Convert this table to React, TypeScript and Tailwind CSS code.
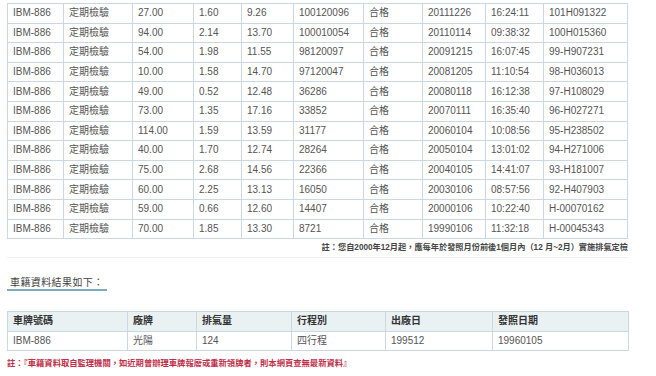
const font = { fontFamily: '"Liberation Sans", "Noto Sans CJK TC", sans-serif' };

const rows = [
  ['27.00', '1.60', '9.26', '100120096', '20111226', '16:24:11', '101H091322'],
  ['94.00', '2.14', '13.70', '100010054', '20110114', '09:38:32', '100H015360'],
  ['54.00', '1.98', '11.55', '98120097', '20091215', '16:07:45', '99-H907231'],
  ['10.00', '1.58', '14.70', '97120047', '20081205', '11:10:54', '98-H036013'],
  ['49.00', '0.52', '12.48', '36286', '20080118', '16:12:38', '97-H108029'],
  ['73.00', '1.35', '17.16', '33852', '20070111', '16:35:40', '96-H027271'],
  ['114.00', '1.59', '13.59', '31177', '20060104', '10:08:56', '95-H238502'],
  ['40.00', '1.70', '12.74', '28264', '20050104', '13:01:02', '94-H271006'],
  ['75.00', '2.68', '14.56', '22366', '20040105', '14:41:07', '93-H181007'],
  ['60.00', '2.25', '13.13', '16050', '20030106', '08:57:56', '92-H407903'],
  ['59.00', '0.66', '12.60', '14407', '20000106', '10:22:40', 'H-00070162'],
  ['70.00', '1.85', '13.30', '8721', '19990106', '11:32:18', 'H-00045343'],
];

const topCols = [56, 69, 61, 48, 52, 70, 59, 63, 58, 84];
const carCols = [120, 69, 95, 94, 107, 136];
const carHead = ['車牌號碼', '廠牌', '排氣量', '行程別', '出廠日', '發照日期'];
const carRow = ['IBM-886', '光陽', '124', '四行程', '199512', '19960105'];

function Cell({ children }: { children: React.ReactNode }) {
  return (
    <td className="h-[19.6px] border border-[#c9d8e3] px-[5px] py-0 text-[10px] leading-none text-[#555] whitespace-nowrap">
      {children}
    </td>
  );
}

export default function App() {
  return (
    <div className="min-h-[376px] w-[656px] bg-white pt-[3px] pl-[7px]" style={font}>
      <div className="w-[621px]">
        <table className="w-[621px] table-fixed border-collapse">
          <colgroup>
            {topCols.map((w, i) => (
              <col key={i} style={{ width: w }} />
            ))}
          </colgroup>
          <tbody>
            {rows.map((r, i) => (
              <tr key={i}>
                <Cell>IBM-886</Cell>
                <Cell>定期檢驗</Cell>
                <Cell>{r[0]}</Cell>
                <Cell>{r[1]}</Cell>
                <Cell>{r[2]}</Cell>
                <Cell>{r[3]}</Cell>
                <Cell>合格</Cell>
                <Cell>{r[4]}</Cell>
                <Cell>{r[5]}</Cell>
                <Cell>{r[6]}</Cell>
              </tr>
            ))}
          </tbody>
        </table>

        <div className="border-b border-[#f0f0f0] pt-[3px] pb-[3px] text-right text-[8.2px] leading-[12px] font-bold text-[#444]">
          註：您自2000年12月起，應每年於發照月份前後1個月內（12 月~2月）實施排氣定檢
        </div>

        <div className="mt-[15px] leading-none">
          <span className="inline-block border-b-2 border-[#7fa9bd] pl-[3px] pr-[3px] text-[10px] leading-[13px] tracking-[0.4px] text-[#444]">
            車籍資料結果如下：
          </span>
        </div>

        <table className="mt-[20px] w-[621px] table-fixed border-collapse">
          <colgroup>
            {carCols.map((w, i) => (
              <col key={i} style={{ width: w }} />
            ))}
          </colgroup>
          <tbody>
            <tr className="bg-[#e9f1f3]">
              {carHead.map((h) => (
                <td
                  key={h}
                  className="h-[19.5px] border border-[#c9d8e3] px-[5px] py-0 text-[10px] leading-none font-bold text-[#333]"
                >
                  {h}
                </td>
              ))}
            </tr>
            <tr>
              {carRow.map((c) => (
                <td
                  key={c}
                  className="h-[19.5px] border border-[#c9d8e3] px-[5px] py-0 text-[10px] leading-none text-[#555]"
                >
                  {c}
                </td>
              ))}
            </tr>
          </tbody>
        </table>

        <div className="mt-[6px] text-[8.3px] leading-[12px] font-bold text-[#c0304a]">
          註：『車籍資料取自監理機關，如近期曾辦理車牌報廢或重新領牌者，則本網頁查無最新資料』
        </div>
      </div>
    </div>
  );
}
